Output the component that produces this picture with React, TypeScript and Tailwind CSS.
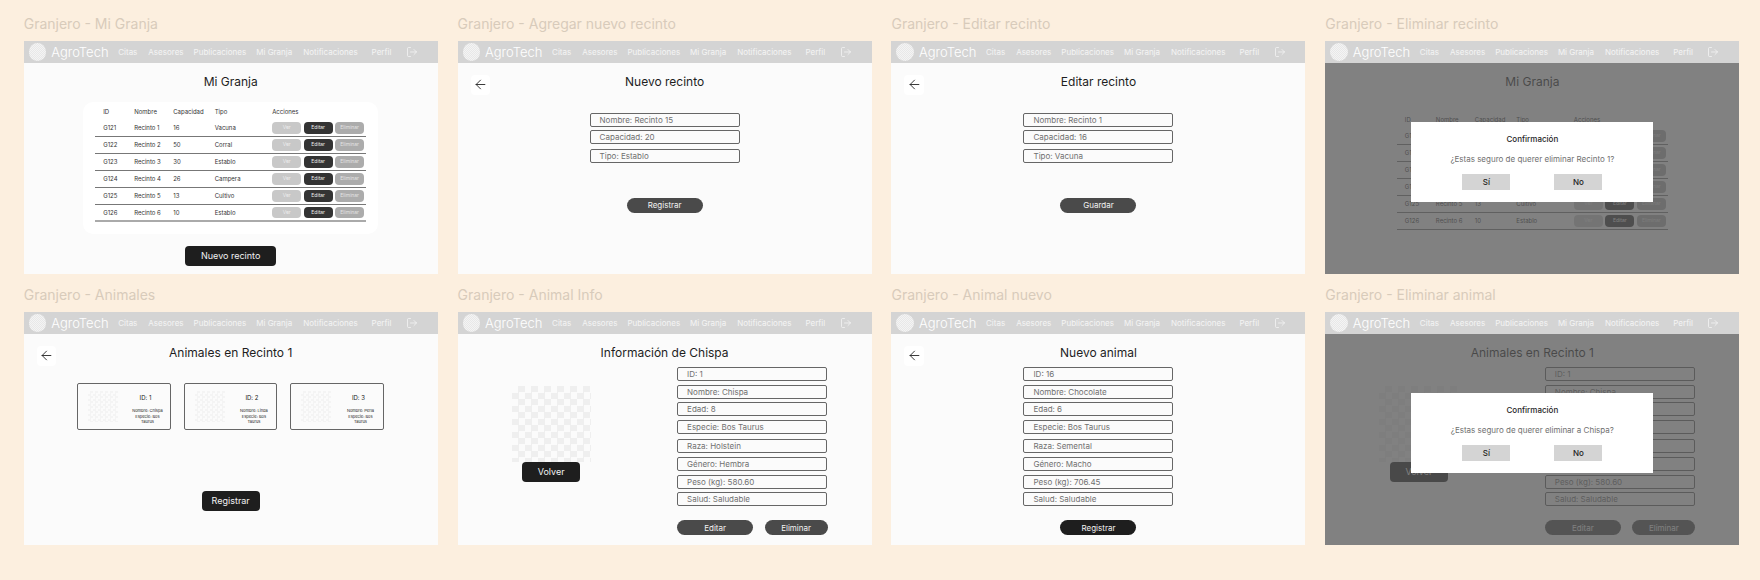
import type { ReactNode } from "react";
import { ArrowLeft, LogOut } from "lucide-react";

const rows = [
  ["G121", "Recinto 1", "16", "Vacuna"],
  ["G122", "Recinto 2", "50", "Corral"],
  ["G123", "Recinto 3", "30", "Establo"],
  ["G124", "Recinto 4", "26", "Campera"],
  ["G125", "Recinto 5", "13", "Cultivo"],
  ["G126", "Recinto 6", "10", "Establo"],
];

const infoFields = [
  { text: "ID: 1", gap: "mt-0" },
  { text: "Nombre: Chispa", gap: "mt-[3.3px]" },
  { text: "Edad: 8", gap: "mt-[3.3px]" },
  { text: "Especie: Bos Taurus", gap: "mt-[4.3px]" },
  { text: "Raza: Holstein", gap: "mt-[4.5px]" },
  { text: "Género: Hembra", gap: "mt-[4.7px]" },
  { text: "Peso (kg): 580.60", gap: "mt-[3.6px]" },
  { text: "Salud: Saludable", gap: "mt-[3.3px]" },
];

const newFields = [
  { text: "ID: 16", gap: "mt-0" },
  { text: "Nombre: Chocolate", gap: "mt-[3.3px]" },
  { text: "Edad: 6", gap: "mt-[3.3px]" },
  { text: "Especie: Bos Taurus", gap: "mt-[4.3px]" },
  { text: "Raza: Semental", gap: "mt-[4.5px]" },
  { text: "Género: Macho", gap: "mt-[4.7px]" },
  { text: "Peso (kg): 706.45", gap: "mt-[3.6px]" },
  { text: "Salud: Saludable", gap: "mt-[3.3px]" },
];

const animals = [
  { id: 1, name: "Chispa", species: "Taurus" },
  { id: 2, name: "Linda", species: "Taurus" },
  { id: 3, name: "Perla", species: "Taurus" },
];

function Navbar() {
  return (
    <nav className="flex h-[21.5px] shrink-0 items-center bg-[#d4d4d4] pl-[5px] text-[8px] leading-[12px] text-[#f4f4f4]">
      <div className="size-[17.5px] rounded-full bg-[repeating-conic-gradient(#e8e8e8_0_25%,#f4f4f4_0_50%)] bg-[length:2px_2px]" />
      <span className="ml-[5px] w-[55px] shrink-0 text-[13px] font-light text-white">AgroTech</span>
      <span className="ml-3">Citas</span>
      <span className="ml-[11px]">Asesores</span>
      <span className="ml-[10px]">Publicaciones</span>
      <span className="ml-[10px]">Mi Granja</span>
      <span className="ml-[11px]">Notificaciones</span>
      <span className="ml-[14px]">Perfil</span>
      <LogOut size={12} strokeWidth={1.6} className="ml-[14.5px]" />
    </nav>
  );
}

function Frame({ label, children }: { label: string; children: ReactNode }) {
  return (
    <div>
      <p className="h-[18px] text-[14px] leading-[18px] text-[#d8cbbb]">{label}</p>
      <div className="mt-2 flex h-[232.5px] flex-col overflow-hidden bg-[#fbfbfb]">
        <Navbar />
        <div className="relative flex-1">{children}</div>
      </div>
    </div>
  );
}

function Title({ children }: { children: ReactNode }) {
  return <h2 className="h-[18px] text-center text-[12px] leading-[20px] text-[#1e1e1e]">{children}</h2>;
}

function BackButton() {
  return (
    <div className="absolute top-[12.5px] left-[13px] flex size-[19.5px] items-center justify-center rounded-[4px] bg-white text-[#1e1e1e]">
      <ArrowLeft size={15} strokeWidth={1.4} />
    </div>
  );
}

function RecintoTable({ dim = false }: { dim?: boolean }) {
  return (
    <div
      className={
        dim
          ? "mx-auto mt-[12px] h-[132px] w-[295px] px-3 pt-[10px] text-[6px] leading-[10px] text-[#333333]"
          : "mx-auto mt-[12px] h-[132px] w-[295px] rounded-[10px] bg-white px-3 pt-[2px] text-[6px] leading-[10px] text-[#333333]"
      }
    >
      <div className="grid h-4 grid-cols-[31px_39px_41.5px_57.5px_1fr] items-center pl-2">
        <span>ID</span>
        <span>Nombre</span>
        <span>Capacidad</span>
        <span>Tipo</span>
        <span>Acciones</span>
      </div>
      {rows.map((row, i) => (
        <div
          key={row[0]}
          className={
            i === rows.length - 1 && !dim
              ? "grid h-[17px] grid-cols-[31px_39px_41.5px_57.5px_1fr] items-center border-b-2 border-[#aaaaaa] pl-2"
              : "grid h-[17px] grid-cols-[31px_39px_41.5px_57.5px_1fr] items-center border-b border-[#777777] pl-2"
          }
        >
          {row.map((cell) => (
            <span key={cell}>{cell}</span>
          ))}
          <div className="flex gap-[2.5px] text-center text-[5px] leading-[11.5px]">
            <span className="h-[11.5px] w-[29px] rounded-[4px] bg-[#c8c8c8] text-[#eeeeee]">Ver</span>
            <span className="h-[11.5px] w-[29px] rounded-[4px] bg-[#333333] text-[#eeeeee]">Editar</span>
            <span className="h-[11.5px] w-[29px] rounded-[4px] bg-[#acacac] text-[#e4e4e4]">Eliminar</span>
          </div>
        </div>
      ))}
    </div>
  );
}

function Field({ text, className = "" }: { text: string; className?: string }) {
  return (
    <div
      className={`h-[14px] w-[150px] rounded-[2px] border border-[#666666] pl-[9px] text-[8px] leading-[12px] text-[#707070] ${className}`}
    >
      {text}
    </div>
  );
}

function FieldStack({ fields }: { fields: { text: string; gap: string }[] }) {
  return (
    <div className="flex w-[150px] flex-col">
      {fields.map((f) => (
        <Field key={f.text} text={f.text} className={f.gap} />
      ))}
    </div>
  );
}

function Pill({ label, dark = false, className = "w-[76px]" }: { label: string; dark?: boolean; className?: string }) {
  return (
    <div
      className={`flex h-[15.5px] items-center justify-center rounded-full text-[8px] text-[#f2f2f2] ${
        dark ? "bg-[#1e1e1e]" : "bg-[#4a4a4a]"
      } ${className}`}
    >
      {label}
    </div>
  );
}

function Modal({ message }: { message: string }) {
  return (
    <div className="absolute inset-0 flex justify-center bg-[#585858]/75 pt-[59px]">
      <div className="flex h-[80px] w-[242px] flex-col items-center bg-white pt-[11px] text-[8px] leading-[12px]">
        <p className="font-medium text-[#1e1e1e]">Confirmación</p>
        <p className="mt-2 text-[#707070]">{message}</p>
        <div className="mt-[9px] flex gap-[44px] font-medium text-[#1e1e1e]">
          <span className="flex h-4 w-12 items-center justify-center bg-[#d4d4d4]">Sí</span>
          <span className="flex h-4 w-12 items-center justify-center bg-[#d4d4d4]">No</span>
        </div>
      </div>
    </div>
  );
}

function MiGranja({ dim = false }: { dim?: boolean }) {
  return (
    <div className="flex flex-col items-center pt-[9.5px]">
      <Title>Mi Granja</Title>
      <RecintoTable dim={dim} />
      {!dim && (
        <div className="mt-[11.5px] flex h-5 w-[91px] items-center justify-center rounded-[4px] bg-[#1e1e1e] text-[9px] text-[#f2f2f2]">
          Nuevo recinto
        </div>
      )}
    </div>
  );
}

function RecintoForm({ title, values, action }: { title: string; values: string[]; action: string }) {
  return (
    <div className="flex flex-col items-center pt-[9.5px]">
      <BackButton />
      <Title>{title}</Title>
      <div className="mt-[22.5px] flex w-[150px] flex-col">
        <Field text={values[0]} />
        <Field text={values[1]} className="mt-[3.5px]" />
        <Field text={values[2]} className="mt-[4.5px]" />
      </div>
      <Pill label={action} className="mt-[35px] w-[76px]" />
    </div>
  );
}

function AnimalInfo({ title }: { title: string }) {
  return (
    <div className="pt-[9.5px]">
      <Title>{title}</Title>
      <div className="flex pl-[54px]">
        <div className="mt-[25px] flex w-[79px] flex-col items-center">
          <div className="h-[76px] w-[79px] bg-[repeating-conic-gradient(#efefef_0_25%,#fbfbfb_0_50%)] bg-[length:13px_13px]" />
          <div className="flex h-5 w-[58px] items-center justify-center rounded-[4px] bg-[#1e1e1e] text-[9px] text-[#f2f2f2]">
            Volver
          </div>
        </div>
        <div className="mt-[6.3px] ml-[86.5px]">
          <FieldStack fields={infoFields} />
          <div className="mt-[13.5px] flex gap-[11.5px]">
            <Pill label="Editar" className="w-[76px]" />
            <Pill label="Eliminar" className="w-[63px]" />
          </div>
        </div>
      </div>
    </div>
  );
}

function Animales() {
  return (
    <div className="pt-[9.5px]">
      <BackButton />
      <Title>Animales en Recinto 1</Title>
      <div className="mt-[21.7px] flex justify-center gap-[13px]">
        {animals.map((a) => (
          <div
            key={a.id}
            className="flex h-[47px] w-[93.5px] items-start rounded-[2px] border border-[#666666] pl-[10px] text-center text-[#222222]"
          >
            <div className="mt-[7px] h-[31px] w-[30px] shrink-0 bg-[repeating-conic-gradient(#f4f4f4_0_25%,#fbfbfb_0_50%)] bg-[length:5px_5px]" />
            <div className="mt-[10.6px] ml-[10px] w-[38px] text-[4px] leading-[5px]">
              <p className="mb-[5.4px] pr-1 text-[6px] leading-[8px]">ID: {a.id}</p>
              <p className="mb-[1px]">Nombre: {a.name}</p>
              <p>
                Especie: Bos
                <br />
                {a.species}
              </p>
            </div>
          </div>
        ))}
      </div>
      <div className="mx-auto mt-[61px] flex h-5 w-[58px] items-center justify-center rounded-[4px] bg-[#1e1e1e] text-[9px] text-[#f2f2f2]">
        Registrar
      </div>
    </div>
  );
}

function AnimalNuevo() {
  return (
    <div className="flex flex-col items-center pt-[9.5px]">
      <BackButton />
      <Title>Nuevo animal</Title>
      <div className="mt-[6.3px]">
        <FieldStack fields={newFields} />
      </div>
      <Pill label="Registrar" dark className="mt-[13.5px] w-[76px]" />
    </div>
  );
}

export default function App() {
  return (
    <div className="grid min-h-[580px] grid-cols-[repeat(4,414px)] content-start gap-x-[19.9px] gap-y-[12.5px] bg-[#fcefdf] pt-[15px] pl-[23.7px] font-['Inter',sans-serif]">
      <Frame label="Granjero - Mi Granja">
        <MiGranja />
      </Frame>
      <Frame label="Granjero - Agregar nuevo recinto">
        <RecintoForm title="Nuevo recinto" values={["Nombre: Recinto 15", "Capacidad: 20", "Tipo: Establo"]} action="Registrar" />
      </Frame>
      <Frame label="Granjero - Editar recinto">
        <RecintoForm title="Editar recinto" values={["Nombre: Recinto 1", "Capacidad: 16", "Tipo: Vacuna"]} action="Guardar" />
      </Frame>
      <Frame label="Granjero - Eliminar recinto">
        <MiGranja dim />
        <Modal message="¿Estas seguro de querer eliminar Recinto 1?" />
      </Frame>
      <Frame label="Granjero - Animales">
        <Animales />
      </Frame>
      <Frame label="Granjero - Animal Info">
        <AnimalInfo title="Información de Chispa" />
      </Frame>
      <Frame label="Granjero - Animal nuevo">
        <AnimalNuevo />
      </Frame>
      <Frame label="Granjero - Eliminar animal">
        <AnimalInfo title="Animales en Recinto 1" />
        <Modal message="¿Estas seguro de querer eliminar a Chispa?" />
      </Frame>
    </div>
  );
}
